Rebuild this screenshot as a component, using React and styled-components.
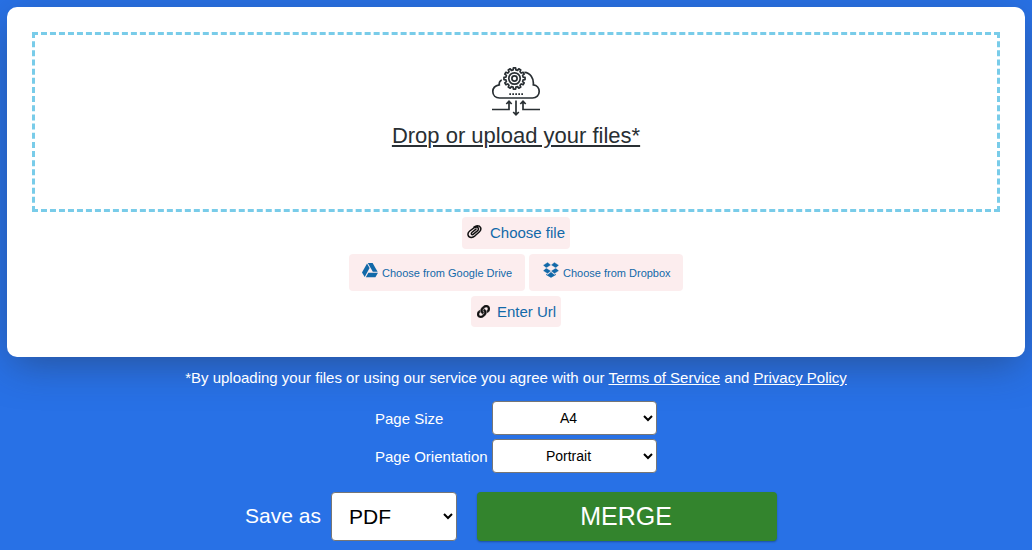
import styled, { createGlobalStyle } from "styled-components";
import { FaLink } from "react-icons/fa";

const GlobalStyle = createGlobalStyle`
  * {
    box-sizing: border-box;
  }

  body {
    margin: 0;
    background: #2871e6;
    font-family: "Liberation Sans", Arial, sans-serif;
    font-size: 15px;
  }
`;

const Page = styled.main`
  height: 550px;
  padding: 7px;
  overflow: hidden;
  color: #fff;
`;

const Card = styled.section`
  height: 350px;
  padding: 25px;
  background: #fff;
  border-radius: 10px;
  box-shadow: 0 10px 40px -5px rgba(40, 50, 70, 0.5);
`;

const DropZone = styled.div`
  height: 180px;
  padding-top: 32px;
  border: 3px dashed #79cce9;
  display: flex;
  flex-direction: column;
  align-items: center;
  color: #292f33;

  svg {
    display: block;
  }
`;

const DropText = styled.span`
  margin-top: 6px;
  font-size: 22px;
  line-height: 26px;
  text-decoration: underline;
`;

const Sources = styled.div`
  margin-top: 5px;
  display: flex;
  flex-direction: column;
  align-items: center;
  gap: 5px;
`;

const SourceRow = styled.div`
  display: flex;
  gap: 4px;
`;

const SourceButton = styled.button`
  width: ${({ $width }) => $width}px;
  height: ${({ $height }) => $height}px;
  padding: 0 0 ${({ $lift }) => $lift || 0}px ${({ $indent }) => $indent}px;
  display: flex;
  align-items: center;
  gap: ${({ $gap }) => $gap}px;
  border: 0;
  border-radius: 4px;
  background: #fcedee;
  color: #1269a9;
  font-family: inherit;
  font-size: 15px;
  white-space: nowrap;

  svg {
    flex-shrink: 0;
    color: #111;
  }
`;

const CloudButton = styled(SourceButton)`
  font-size: 11px;

  svg {
    color: #1269a9;
    margin-bottom: 4px;
  }
`;

const Terms = styled.p`
  margin: 12px 0 0;
  line-height: 18px;
  text-align: center;

  a {
    color: inherit;
  }
`;

const Options = styled.div`
  width: 282px;
  margin: 14px 0 0 368px;
  display: grid;
  grid-template-columns: 113px 165px;
  column-gap: 4px;
  row-gap: 4px;
  align-items: center;
`;

const Select = styled.select`
  height: 34px;
  border: 1px solid #767676;
  border-radius: 4px;
  background: #fff;
  color: #000;
  font-family: inherit;
  font-size: 14px;
  text-align: center;
`;

const SaveRow = styled.div`
  margin: 19px 0 0 238px;
  display: flex;
  align-items: center;
`;

const SaveLabel = styled.label`
  width: 86px;
  padding-bottom: 2px;
  font-size: 21px;
`;

const FormatSelect = styled(Select)`
  width: 126px;
  height: 49px;
  padding-left: 13px;
  font-size: 21px;
  text-align: left;
`;

const MergeButton = styled.button`
  width: 300px;
  height: 49px;
  margin-left: 20px;
  padding: 0 2px 0 0;
  border: 0;
  border-radius: 4px;
  background: #33842d;
  box-shadow: 0 1px 2px rgba(0, 0, 0, 0.3);
  color: #fff;
  font-family: inherit;
  font-size: 25px;
`;

function gearOutline() {
  const points = [];
  const teeth = 12;
  for (let i = 0; i < teeth; i++) {
    [[-0.3, 8.7], [-0.2, 10.6], [0.2, 10.6], [0.3, 8.7]].forEach(([offset, radius]) => {
      const angle = ((i + offset) * Math.PI * 2) / teeth - Math.PI / 2;
      points.push(`${22.5 + radius * Math.cos(angle)},${11.5 + radius * Math.sin(angle)}`);
    });
  }
  return points.join(" ");
}

function CloudGear() {
  return (
    <svg width="50" height="50" viewBox="-1 0 50 50" fill="none" stroke="currentColor" strokeWidth="1.7">
      <path d="M9.8 13.2C7.8 13.5 7 16 7.3 17.8C3 18.5.8 21.1.8 24.5C.8 28.3 3.6 31 7.5 31H40.5C44.5 31 47.2 28.2 47.2 24.6C47.2 21.2 44.9 18.2 41.3 17.8C42 11.2 38.2 5.6 32.4 5.3" />
      <polygon points={gearOutline()} strokeLinejoin="round" />
      <circle cx="22.5" cy="11.5" r="5.7" />
      <circle cx="22.5" cy="11.5" r="2.6" />
      <path d="M17.3 27.2H31" strokeDasharray="1.7 1.3" />
      <path d="M0 42.5H17V34.5M14.3 37L17 34.2L19.7 37M48 42.5H31V34.5M28.3 37L31 34.2L33.7 37M24 33.5V47.5M21.2 45L24 47.8L26.8 45" />
    </svg>
  );
}

function Paperclip() {
  return (
    <svg width="15" height="18" viewBox="0 0 15 18" fill="none" stroke="currentColor" strokeWidth="1.5" strokeLinecap="round">
      <path d="M9 5.1L4.9 8.5C3.6 10 4.8 11.3 6.4 10.2L10.4 6.9C12.8 4.7 10.5 2 7.6 3.5L2.7 7C-.4 9.5 1 13.6 4.5 13.4C6 13.3 7 12.6 8 11.8L12.2 8C15.4 5 13.6 1.4 9.4 1.9C8.4 2.1 7.7 2.5 7 3" />
    </svg>
  );
}

function DriveLogo() {
  return (
    <svg width="16" height="15" viewBox="0 0 16 15" fill="currentColor">
      <path d="M5 .5L7.6 5L2.7 14L0 9.5Z" />
      <path d="M5.8 0H10.6L15.6 8.8H10.8Z" />
      <path d="M6.3 9.7H16L13.4 14.3H3.8Z" />
    </svg>
  );
}

function DropboxLogo() {
  return (
    <svg width="16" height="17" viewBox="0 0 16 17" fill="currentColor">
      <path d="M4.6 .3L8 3.1L3.3 6L0 3.3ZM11.4 .3L16 3.3L12.7 6L8 3.1ZM3.3 6L8 8.9L4.6 11.7L0 8.7ZM12.7 6L16 8.7L11.4 11.7L8 8.9Z" stroke="#fcedee" strokeWidth=".35" />
      <path d="M3.2 11.8L4.6 12.7L8 9.9L11.4 12.7L12.8 11.8V12.9L8 15.8L3.2 12.9Z" />
    </svg>
  );
}

export default function App() {
  return (
    <>
      <GlobalStyle />
      <Page>
        <Card>
          <DropZone>
            <CloudGear />
            <DropText>Drop or upload your files*</DropText>
          </DropZone>
          <Sources>
            <SourceButton $width={108} $height={32} $gap={8} $indent={5} $lift={1}>
              <Paperclip />
              <span>Choose file</span>
            </SourceButton>
            <SourceRow>
              <CloudButton $width={176} $height={37} $gap={4} $indent={13}>
                <DriveLogo />
                <span>Choose from Google Drive</span>
              </CloudButton>
              <CloudButton $width={154} $height={37} $gap={4} $indent={14}>
                <DropboxLogo />
                <span>Choose from Dropbox</span>
              </CloudButton>
            </SourceRow>
            <SourceButton $width={90} $height={31} $gap={7} $indent={6}>
              <FaLink size={13} stroke="currentColor" strokeWidth={18} />
              <span>Enter Url</span>
            </SourceButton>
          </Sources>
        </Card>

        <Terms>
          *By uploading your files or using our service you agree with our{" "}
          <a href="#terms">Terms of Service</a> and <a href="#privacy">Privacy Policy</a>
        </Terms>

        <Options>
          <label htmlFor="size">Page Size</label>
          <Select id="size">
            <option>A4</option>
          </Select>
          <label htmlFor="orientation">Page Orientation</label>
          <Select id="orientation">
            <option>Portrait</option>
          </Select>
        </Options>

        <SaveRow>
          <SaveLabel htmlFor="format">Save as</SaveLabel>
          <FormatSelect id="format">
            <option>PDF</option>
          </FormatSelect>
          <MergeButton type="button">MERGE</MergeButton>
        </SaveRow>
      </Page>
    </>
  );
}
